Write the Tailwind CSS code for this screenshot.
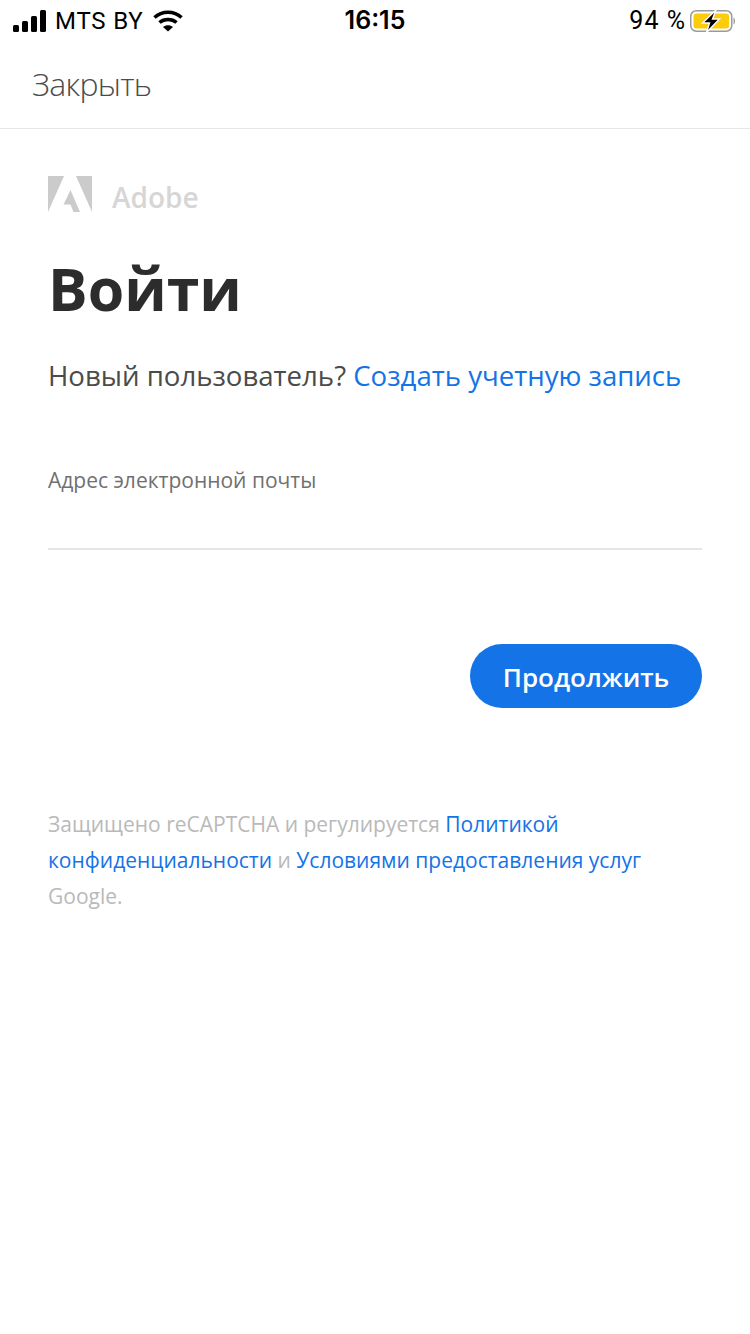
<!DOCTYPE html>
<html lang="ru">
<head>
    <meta charset="UTF-8">
    <meta name="viewport" content="width=device-width, initial-scale=1.0">
    <title>Adobe - Войти</title>
    <script src="https://cdn.jsdelivr.net/npm/@tailwindcss/browser@4"></script>
</head>
<body class="bg-white font-['Open_Sans',sans-serif] w-[750px] h-[1334px] overflow-hidden">
    <!-- Status bar -->
    <div class="h-[40px] grid grid-cols-3 items-center px-[13px] pt-[1px] text-black font-['Inter',sans-serif] text-[24px]">
        <div class="flex items-center">
            <svg width="34" height="22" viewBox="0 0 34 22" fill="#000" class="mr-[8px]">
                <rect x="0" y="15" width="6" height="7" rx="1.5"/>
                <rect x="9" y="11" width="6" height="11" rx="1.5"/>
                <rect x="18" y="6" width="6" height="16" rx="1.5"/>
                <rect x="27" y="0" width="6" height="22" rx="1.5"/>
            </svg>
            <span class="font-['Roboto',sans-serif] tracking-[0.8px]">MTS BY</span>
            <svg width="30" height="22" viewBox="0 0 30 22" class="ml-[10px]" fill="none" stroke="#000" stroke-width="3.6">
                <path d="M1.5 7.5 C9 0.5 21 0.5 28.5 7.5"/>
                <path d="M6.5 12.5 C11 8.5 19 8.5 23.5 12.5"/>
                <path d="M10 17 L15 21.5 L20 17 C17 14.5 13 14.5 10 17 Z" fill="#000" stroke="none"/>
            </svg>
        </div>
        <div class="text-center text-[25px] font-semibold">16:15</div>
        <div class="flex items-center justify-end">
            <span class="font-['Roboto',sans-serif] text-[25px] tracking-[1px] mr-[4px]">94 %</span>
            <svg width="46" height="24" viewBox="0 0 46 24" class="mr-[1px]">
                <rect x="0.75" y="1.75" width="41" height="20.5" rx="5.5" fill="none" stroke="#9a9a9a" stroke-width="1.5"/>
                <rect x="3.5" y="4.5" width="35.5" height="15" rx="3" fill="#fccb0a"/>
                <path d="M43.5 8.5 C45.5 9.5 45.5 14.5 43.5 15.5 Z" fill="#9a9a9a"/>
                <path d="M26 1 L12.5 14 L19.5 14 L16.5 23.5 L29.5 10 L22.5 10 Z" fill="#000" stroke="#fff" stroke-width="1.4"/>
            </svg>
        </div>
    </div>

    <!-- Close bar -->
    <div class="h-[89px] border-b border-[#e6e6e6] flex items-center pl-[32px]">
        <span class="text-[32px] font-light text-[#4b4b4b] tracking-[-0.7px]">Закрыть</span>
    </div>

    <main class="px-[48px]">
        <!-- Logo -->
        <div class="flex items-center mt-[47px] h-[36px]">
            <svg width="44" height="36" viewBox="0 0 44 36" fill="#cbcbcb">
                <path d="M0 0 H16 L0 36 Z"/>
                <path d="M28 0 H44 V36 Z"/>
                <path d="M22.5 14 L32 36 H25.5 L22.5 28.5 H15.5 Z"/>
            </svg>
            <span class="ml-[20px] pt-[6px] text-[28px] font-semibold text-[#d6d6d6] leading-none">Adobe</span>
        </div>

        <h1 class="mt-[36px] text-[59px] font-bold text-[#2c2c2c] leading-[80px]">Войти</h1>

        <p class="mt-[27px] text-[27.6px] leading-[40px] text-[#4b4b4b] whitespace-nowrap">Новый пользователь? <a class="text-[#1473e6]">Создать учетную запись</a></p>

        <!-- Email field -->
        <label class="block mt-[69px] text-[21px] leading-[32px] text-[#707070]">Адрес электронной почты</label>
        <div class="h-[54px] border-b-2 border-[#e6e6e6]"></div>

        <div class="flex justify-end mt-[94px]">
            <button class="w-[232px] h-[64px] pt-[3px] rounded-full bg-[#1473e6] text-white text-[26px] font-semibold">Продолжить</button>
        </div>

        <p class="mt-[98px] text-[21px] leading-[36px] text-[#b9b9b9]">Защищено reCAPTCHA и регулируется <a class="text-[#1473e6]">Политикой конфиденциальности</a> и <a class="text-[#1473e6]">Условиями предоставления услуг</a> Google.</p>
    </main>
</body>
</html>
